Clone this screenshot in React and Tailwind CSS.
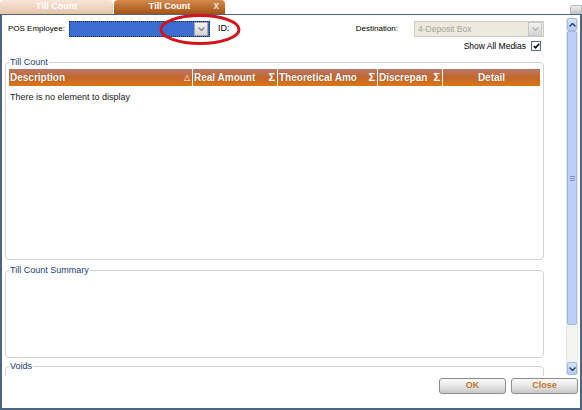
import React from 'react';

function DropBtn({ disabled }) {
    return (
        <div className={"w-[14px] h-[14px] border flex items-center justify-center bg-gradient-to-b from-[#f4f4f4] to-[#d4d4d4] " + (disabled ? "border-[#c8c8c8]" : "border-[#a8a8a8]")}>
            <svg width="7" height="4" viewBox="0 0 7 4"><path d="M0.5 0.5 L3.5 3.5 L6.5 0.5" fill="none" stroke={disabled ? '#b0b0b0' : '#808080'} strokeWidth="1.2"/></svg>
        </div>
    );
}

function Group({ title, className, children }) {
    return (
        <div className={"relative border border-[#d6d3cc] rounded-[4px] " + className}>
            <span className="absolute -top-[7px] left-[3px] bg-white px-[1px] leading-[12px] text-[9px] text-[#223c6e] whitespace-nowrap">{title}</span>
            {children}
        </div>
    );
}

function HeadCell({ w, children, sigma, sort, center }) {
    return (
        <div className={"h-full flex items-center border-r border-white last:border-r-0 px-[1px] " + w + (center ? " justify-center" : "")}>
            <span className={"font-bold text-white text-[10px] [text-shadow:0_0_1px_#7a3a10] truncate " + (center ? "" : "flex-1")}>{children}</span>
            {sort && <span className="text-white text-[8px] leading-none pr-[1px]">△</span>}
            {sigma && <span className="text-white font-bold text-[11px] leading-none pr-[1px]">Σ</span>}
        </div>
    );
}

export default function App() {
    return (
        <div className="w-[582px] h-[410px] bg-white relative overflow-hidden text-[9px] text-black" style={{ fontFamily: '"Liberation Sans", Arial, sans-serif' }}>
            {/* tabs */}
            <div className="flex h-[14px] items-end">
                <div className="w-[113px] h-[14px] rounded-t-[4px] bg-gradient-to-b from-[#f8e6d8] to-[#e6c4aa] flex items-center justify-center text-white font-bold text-[9px]">Till Count</div>
                <div className="ml-[1px] w-[111px] h-[14px] rounded-t-[4px] bg-gradient-to-b from-[#d58a4c] to-[#a45312] flex items-center text-white font-bold text-[9px] relative">
                    <span className="flex-1 text-center">Till Count</span>
                    <span className="absolute right-[6px] -top-[1px] text-[10px] leading-[14px] text-[#f4e0d0]">x</span>
                </div>
                <div className="flex-1"></div>
                <div className="w-[12px] h-[9px] rounded-tl-[3px] bg-gradient-to-b from-[#ececec] to-[#c4c4c4] border border-[#b8b8b8] border-b-0"></div>
            </div>
            {/* panel */}
            <div className="h-[396px] border-t border-l-2 border-r-2 border-b-2 border-[#4d6585] flex flex-col">
                <div className="h-[361px] flex">
                    <div className="flex-1 overflow-hidden pl-[3px] pr-[22px]">
                        <div className="mt-[6px] h-[16px] flex items-center pl-[3px] whitespace-nowrap">
                            <span className="w-[61px] shrink-0 text-[8px]">POS Employee:</span>
                            <div className="w-[141px] h-[16px] shrink-0 bg-[#3b6dd0] border border-dotted border-[#1a2a50] flex items-center justify-end pr-[1px]">
                                <DropBtn />
                            </div>
                            <span className="ml-[8px]">ID:</span>
                            <div className="flex-1"></div>
                            <span className="mr-[16px] text-[8px]">Destination:</span>
                            <div className="w-[130px] h-[16px] shrink-0 bg-[#ece9de] border border-[#cfcbc0] flex items-center pl-[3px] pr-[1px]">
                                <span className="flex-1 text-[#a8a498] text-[8.5px]">4-Deposit Box</span>
                                <DropBtn disabled />
                            </div>
                        </div>
                        <div className="mt-[3px] h-[12px] flex items-center justify-end">
                            <span className="text-[8.5px]">Show All Medias</span>
                            <div className="ml-[5px] mr-[3px] w-[10px] h-[10px] border border-[#5a6a80] bg-white flex items-center justify-center">
                                <svg width="7" height="6" viewBox="0 0 7 6"><path d="M0.8 3 L2.6 4.8 L6.2 0.8" fill="none" stroke="#000" strokeWidth="1.5"/></svg>
                            </div>
                        </div>
                        <Group title="Till Count" className="mt-[10px] h-[198px] px-[3px] pt-[6px]">
                            <div className="h-[17px] flex bg-gradient-to-b from-[#b87866] via-[#c4662a] to-[#dc7610]">
                                <HeadCell w="w-[184px]" sort>Description</HeadCell>
                                <HeadCell w="w-[85px]" sigma>Real Amount</HeadCell>
                                <HeadCell w="w-[100px]" sigma>Theoretical Amo</HeadCell>
                                <HeadCell w="w-[65px]" sigma>Discrepan</HeadCell>
                                <HeadCell w="flex-1" center>Detail</HeadCell>
                            </div>
                            <div className="mt-[5px] pl-[1px] text-[#202020]">There is no element to display</div>
                        </Group>
                        <Group title="Till Count Summary" className="mt-[10px] h-[88px]" />
                        <Group title="Voids" className="mt-[8px] h-[40px]" />
                    </div>
                    {/* scrollbar */}
                    <div className="w-[12px] mt-[3px] mb-[1px] mr-[2px] flex flex-col bg-[#f3f3ef] border-x border-[#e4e4e0]">
                        <div className="h-[13px] bg-gradient-to-b from-[#d8e4fb] to-[#b6cbf4] border border-[#a4b8e0] rounded-[2px] flex items-center justify-center">
                            <svg width="7" height="4" viewBox="0 0 7 4"><path d="M0.5 3.5 L3.5 0.5 L6.5 3.5" fill="none" stroke="#2a3c6c" strokeWidth="1.4"/></svg>
                        </div>
                        <div className="h-[294px] bg-[#bcd0f6] border border-[#9fb6e6] rounded-[2px] flex items-center justify-center">
                            <div className="flex flex-col gap-[1px]">
                                <div className="w-[5px] h-[1px] bg-[#7e96c8]"></div>
                                <div className="w-[5px] h-[1px] bg-[#7e96c8]"></div>
                                <div className="w-[5px] h-[1px] bg-[#7e96c8]"></div>
                            </div>
                        </div>
                        <div className="flex-1"></div>
                        <div className="h-[13px] bg-gradient-to-b from-[#d8e4fb] to-[#b6cbf4] border border-[#a4b8e0] rounded-[2px] flex items-center justify-center">
                            <svg width="7" height="4" viewBox="0 0 7 4"><path d="M0.5 0.5 L3.5 3.5 L6.5 0.5" fill="none" stroke="#2a3c6c" strokeWidth="1.4"/></svg>
                        </div>
                    </div>
                </div>
                {/* footer */}
                <div className="flex-1 flex justify-end items-start pt-[2px] pr-[2px] gap-[5px]">
                    <div className="w-[67px] h-[16px] rounded-[3px] border border-[#8c8c8c] bg-gradient-to-b from-[#fafafa] via-[#e6e6e6] to-[#c8c8c8] flex items-center justify-center font-bold text-[#c4782e]">OK</div>
                    <div className="w-[67px] h-[16px] rounded-[3px] border border-[#8c8c8c] bg-gradient-to-b from-[#fafafa] via-[#e6e6e6] to-[#c8c8c8] flex items-center justify-center font-bold text-[#c4782e]">Close</div>
                </div>
            </div>
            {/* red highlight */}
            <svg className="absolute left-[158px] top-[13px]" width="84" height="33" viewBox="0 0 84 33">
                <ellipse cx="42" cy="16.5" rx="39" ry="14" fill="none" stroke="#d4141c" strokeWidth="3"/>
            </svg>
        </div>
    );
}
